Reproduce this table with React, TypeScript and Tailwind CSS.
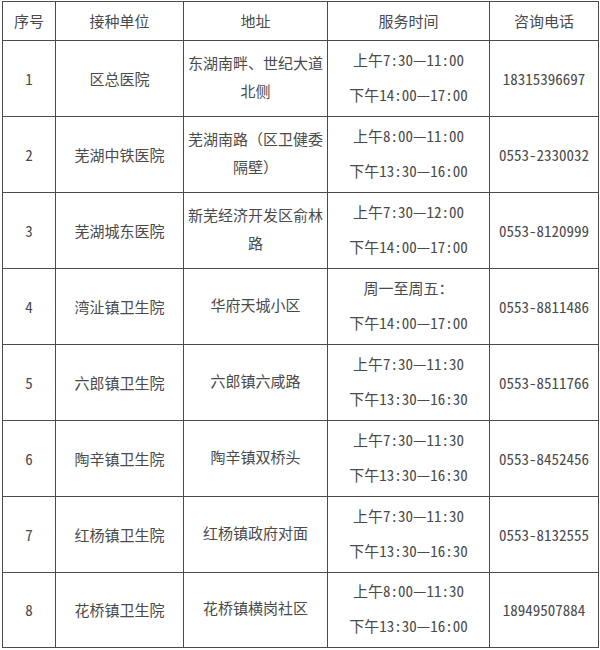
const rows = [
  {
    no: "1",
    unit: "区总医院",
    addr: ["东湖南畔、世纪大道", "北侧"],
    time: ["上午7:30—11:00", "下午14:00—17:00"],
    tel: "18315396697",
    h: "h-[76px]",
  },
  {
    no: "2",
    unit: "芜湖中铁医院",
    addr: ["芜湖南路（区卫健委", "隔壁）"],
    time: ["上午8:00—11:00", "下午13:30—16:00"],
    tel: "0553-2330032",
    h: "h-[76px]",
  },
  {
    no: "3",
    unit: "芜湖城东医院",
    addr: ["新芜经济开发区俞林", "路"],
    time: ["上午7:30—12:00", "下午14:00—17:00"],
    tel: "0553-8120999",
    h: "h-[76px]",
  },
  {
    no: "4",
    unit: "湾沚镇卫生院",
    addr: ["华府天城小区"],
    time: ["周一至周五：", "下午14:00—17:00"],
    tel: "0553-8811486",
    h: "h-[76px]",
  },
  {
    no: "5",
    unit: "六郎镇卫生院",
    addr: ["六郎镇六咸路"],
    time: ["上午7:30—11:30", "下午13:30—16:30"],
    tel: "0553-8511766",
    h: "h-[76px]",
  },
  {
    no: "6",
    unit: "陶辛镇卫生院",
    addr: ["陶辛镇双桥头"],
    time: ["上午7:30—11:30", "下午13:30—16:30"],
    tel: "0553-8452456",
    h: "h-[76px]",
  },
  {
    no: "7",
    unit: "红杨镇卫生院",
    addr: ["红杨镇政府对面"],
    time: ["上午7:30—11:30", "下午13:30—16:30"],
    tel: "0553-8132555",
    h: "h-[76px]",
  },
  {
    no: "8",
    unit: "花桥镇卫生院",
    addr: ["花桥镇横岗社区"],
    time: ["上午8:00—11:30", "下午13:30—16:00"],
    tel: "18949507884",
    h: "h-[74px]",
  },
]

const cell = "border border-[#4a4a4a] p-0 text-center align-middle"

export default function App() {
  return (
    <div className="min-h-[650px] w-[600px] bg-white pl-[2px] pt-[1px] font-['Noto_Sans_Mono_CJK_SC','Noto_Sans_CJK_SC',sans-serif] text-[15px] leading-[20px] text-[#4a4a4a]">
      <table className="w-[596px] table-fixed border-collapse">
        <colgroup>
          <col className="w-[53px]" />
          <col className="w-[128px]" />
          <col className="w-[144px]" />
          <col className="w-[162px]" />
          <col className="w-[109px]" />
        </colgroup>
        <thead>
          <tr className="h-[39px]">
            <th className={`${cell} font-normal`}>序号</th>
            <th className={`${cell} font-normal`}>接种单位</th>
            <th className={`${cell} font-normal`}>地址</th>
            <th className={`${cell} font-normal`}>服务时间</th>
            <th className={`${cell} font-normal`}>咨询电话</th>
          </tr>
        </thead>
        <tbody>
          {rows.map((r) => (
            <tr key={r.no} className={r.h}>
              <td className={cell}>{r.no}</td>
              <td className={cell}>{r.unit}</td>
              <td className={`${cell} leading-[28px]`}>
                <div className="pb-[4px]">
                  {r.addr.map((line) => (
                    <div key={line} className="whitespace-nowrap">
                      {line}
                    </div>
                  ))}
                </div>
              </td>
              <td className={`${cell} leading-[35px]`}>
                <div className="pb-[4px]">
                  {r.time.map((line) => (
                    <div key={line} className="whitespace-nowrap">
                      {line}
                    </div>
                  ))}
                </div>
              </td>
              <td className={cell}>{r.tel}</td>
            </tr>
          ))}
        </tbody>
      </table>
    </div>
  )
}
